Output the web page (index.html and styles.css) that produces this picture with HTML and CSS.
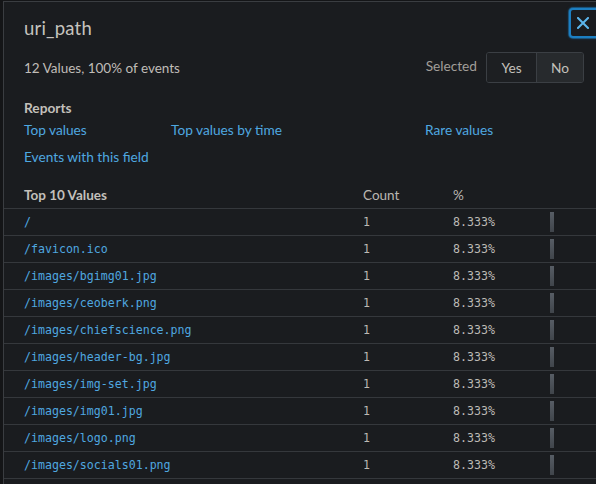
FILE: index.html
```html
<!DOCTYPE html>
<html>
<head>
<meta charset="utf-8">
<link rel="stylesheet" href="styles.css">
</head>
<body>
<div class="backdrop">
  <div class="popover">
    <button class="close" aria-label="Close">
      <svg width="12" height="12" viewBox="0 0 12 12"><path d="M1 1 L11 11 M11 1 L1 11" stroke="#5cb6ec" stroke-width="2" stroke-linecap="square" fill="none"/></svg>
    </button>
    <h2 class="title">uri_path</h2>
    <div class="summary">
      <span class="count-text">12 Values, 100% of events</span>
      <div class="selected">
        <span class="sel-label">Selected</span>
        <div class="seg">
          <span class="seg-btn">Yes</span>
          <span class="seg-btn active">No</span>
        </div>
      </div>
    </div>
    <div class="reports">
      <div class="reports-title">Reports</div>
      <div class="links">
        <a class="link">Top values</a>
        <a class="link">Top values by time</a>
        <a class="link">Rare values</a>
        <a class="link">Events with this field</a>
      </div>
    </div>
    <div class="table">
      <div class="row head">
        <span class="c-val">Top 10 Values</span>
        <span class="c-count">Count</span>
        <span class="c-pct">%</span>
        <span></span>
      </div>
      <div class="row"><span class="c-val mono">/</span><span class="c-count mono">1</span><span class="c-pct mono">8.333%</span><span class="bar"></span></div>
      <div class="row"><span class="c-val mono">/favicon.ico</span><span class="c-count mono">1</span><span class="c-pct mono">8.333%</span><span class="bar"></span></div>
      <div class="row"><span class="c-val mono">/images/bgimg01.jpg</span><span class="c-count mono">1</span><span class="c-pct mono">8.333%</span><span class="bar"></span></div>
      <div class="row"><span class="c-val mono">/images/ceoberk.png</span><span class="c-count mono">1</span><span class="c-pct mono">8.333%</span><span class="bar"></span></div>
      <div class="row"><span class="c-val mono">/images/chiefscience.png</span><span class="c-count mono">1</span><span class="c-pct mono">8.333%</span><span class="bar"></span></div>
      <div class="row"><span class="c-val mono">/images/header-bg.jpg</span><span class="c-count mono">1</span><span class="c-pct mono">8.333%</span><span class="bar"></span></div>
      <div class="row"><span class="c-val mono">/images/img-set.jpg</span><span class="c-count mono">1</span><span class="c-pct mono">8.333%</span><span class="bar"></span></div>
      <div class="row"><span class="c-val mono">/images/img01.jpg</span><span class="c-count mono">1</span><span class="c-pct mono">8.333%</span><span class="bar"></span></div>
      <div class="row"><span class="c-val mono">/images/logo.png</span><span class="c-count mono">1</span><span class="c-pct mono">8.333%</span><span class="bar"></span></div>
      <div class="row"><span class="c-val mono">/images/socials01.png</span><span class="c-count mono">1</span><span class="c-pct mono">8.333%</span><span class="bar"></span></div>
    </div>
  </div>
</div>
</body>
</html>
```
FILE: styles.css
```css
html, body {
  margin: 0;
  padding: 0;
  width: 596px;
  height: 484px;
  overflow: hidden;
  background: #141517;
  font-family: "Lato", "Open Sans", sans-serif;
  color: #c3c0bb;
}
.backdrop {
  padding: 1px 0 0 3px;
}
.popover {
  position: relative;
  width: 610px;
  height: 500px;
  background: #1a1c1f;
  border-top: 1px solid #3a3d41;
  border-left: 1px solid #3a3d41;
  box-sizing: border-box;
}
.close {
  position: absolute;
  top: 6px;
  left: 565px;
  width: 34px;
  height: 30px;
  padding: 0 6px 0 0;
  background: #1a1c1f;
  border: 2px solid #1c7fc2;
  border-radius: 4px;
  box-shadow: 0 0 0 1px rgba(28, 127, 194, 0.45), 0 0 3px rgba(28, 127, 194, 0.6);
  display: flex;
  align-items: center;
  justify-content: center;
}
.title {
  margin: 0;
  padding: 14px 0 0 20px;
  height: 32px;
  line-height: 24px;
  font-size: 18.5px;
  font-weight: 400;
  color: #c6c3be;
  letter-spacing: 0.2px;
}
.summary {
  display: flex;
  align-items: center;
  justify-content: space-between;
  height: 31px;
  margin-top: 4px;
  padding-left: 20px;
  width: 580px;
  box-sizing: border-box;
}
.count-text {
  font-size: 13.5px;
  color: #c0bdb8;
}
.selected {
  display: flex;
  align-items: center;
  gap: 9px;
}
.sel-label {
  font-size: 13.7px;
  color: #a19e99;
  margin-top: -4px;
}
.seg {
  display: flex;
  height: 31px;
  border: 1px solid #3b3f44;
  border-radius: 3px;
  box-sizing: border-box;
  overflow: hidden;
}
.seg-btn {
  display: flex;
  align-items: center;
  justify-content: center;
  font-size: 13.7px;
  color: #c3c0bb;
  width: 49px;
  background: #1d1f22;
}
.seg-btn.active {
  width: 46px;
  border-left: 1px solid #3b3f44;
  background: #272a2d;
}
.reports {
  padding: 17px 0 0 20px;
}
.reports-title {
  font-size: 13.7px;
  font-weight: 700;
  color: #c3c0bb;
  line-height: 16px;
}
.links {
  display: grid;
  grid-template-columns: 147px 254px auto;
  grid-auto-rows: 27px;
  align-items: center;
}
.link {
  font-size: 13.7px;
  color: #4fa8e0;
  cursor: pointer;
}
.table {
  margin-top: 17px;
}
.row {
  display: grid;
  grid-template-columns: 339px 90px 97px 4px;
  align-items: center;
  height: 26px;
  padding-left: 20px;
  border-bottom: 1px solid #35383c;
}
.row.head {
  height: 21px;
  font-size: 13.5px;
  align-items: start;
}
.row.head .c-val {
  font-weight: 700;
  color: #c3c0bb;
}
.row.head .c-count,
.row.head .c-pct {
  color: #bab7b2;
}
.mono {
  font-family: "DejaVu Sans Mono", "Liberation Mono", monospace;
  font-size: 11.6px;
}
.c-val.mono {
  color: #4fa8e0;
}
.c-count.mono,
.c-pct.mono {
  color: #bdbab5;
}
.bar {
  display: block;
  width: 4px;
  height: 20px;
  background: linear-gradient(#575d65, #40454b);
}
```
